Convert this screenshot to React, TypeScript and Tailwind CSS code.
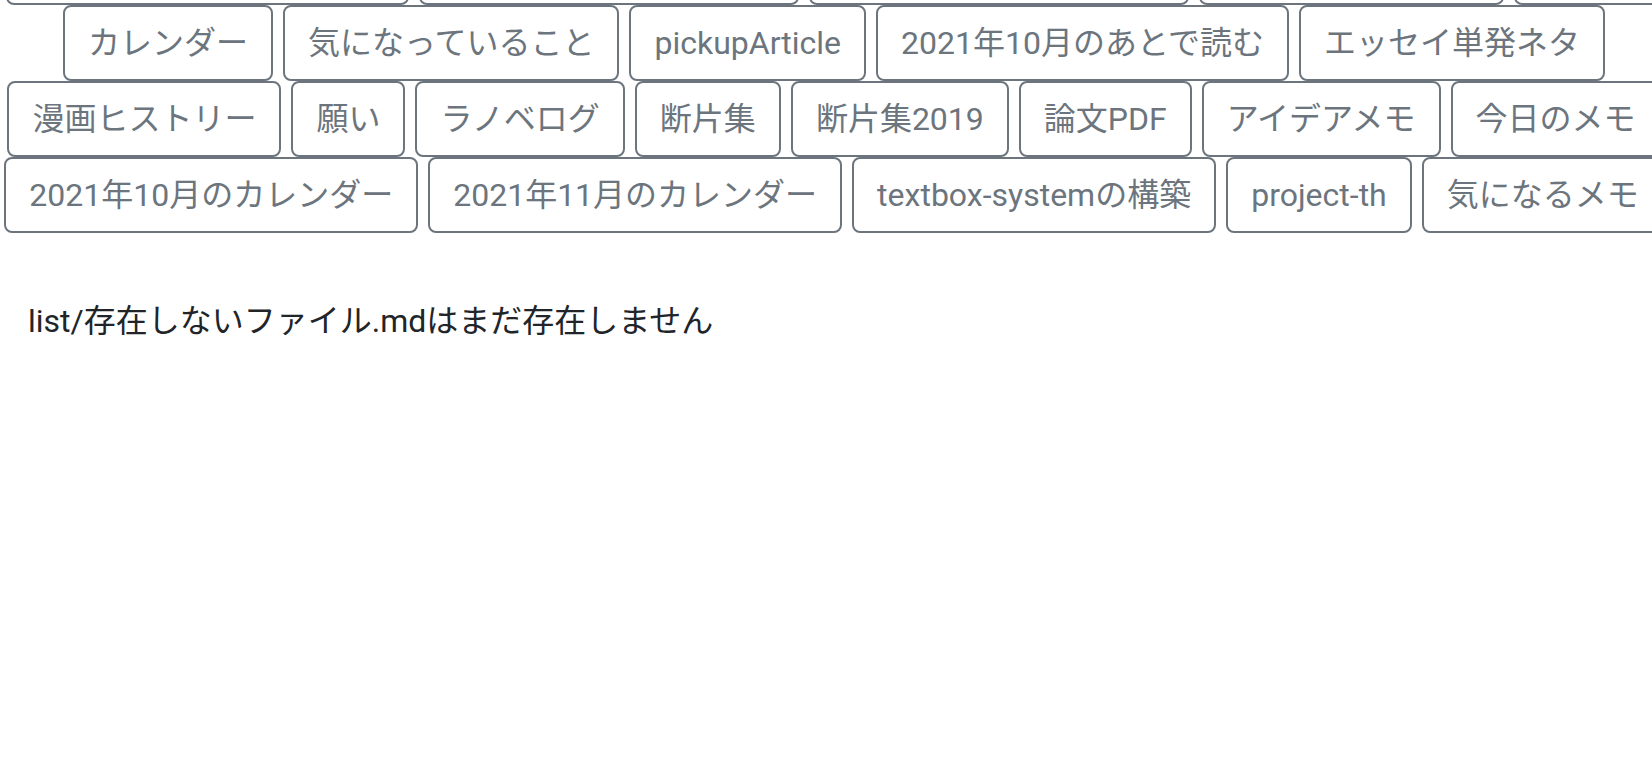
const rows: string[][] = [
  ["2021年9月のカレンダー", "2021年9月のあとで読む", "読書メモ2021年", "ブログ下書き", "日記"],
  ["カレンダー", "気になっていること", "pickupArticle", "2021年10月のあとで読む", "エッセイ単発ネタ"],
  ["漫画ヒストリー", "願い", "ラノベログ", "断片集", "断片集2019", "論文PDF", "アイデアメモ", "今日のメモ"],
  ["2021年10月のカレンダー", "2021年11月のカレンダー", "textbox-systemの構築", "project-th", "気になるメモ"],
];

// first row sits above the fold (page is scrolled), only its bottom edge shows
const hiddenWidths = ["w-[403px]", "w-[380px]", "w-[380px]", "w-[305px]", "w-[148px]"];

function Tag({ label, className = "" }: { label: string; className?: string }) {
  return (
    <a
      href="#"
      className={`block shrink-0 h-[76px] px-[23px] py-[12px] border-2 border-[#6c757d] rounded-[8px] bg-white text-[#6c757d] text-[32px] leading-[48px] whitespace-nowrap overflow-hidden text-center ${className}`}
    >
      {label}
    </a>
  );
}

export default function App() {
  return (
    <div className="min-h-screen w-full overflow-hidden bg-white font-['Roboto','Noto_Sans_CJK_JP',sans-serif]">
      <div className="w-[1668px] -mt-[71px] flex flex-col">
        {rows.map((row, i) => (
          <div key={i} className="flex justify-center gap-x-[10px]">
            {row.map((label, j) => (
              <Tag key={label} label={label} className={i === 0 ? hiddenWidths[j] : ""} />
            ))}
          </div>
        ))}
      </div>
      <p className="mt-[64px] pl-[28px] text-[32px] leading-[48px] text-[#212529]">
        list/存在しないファイル.mdはまだ存在しません
      </p>
    </div>
  );
}
